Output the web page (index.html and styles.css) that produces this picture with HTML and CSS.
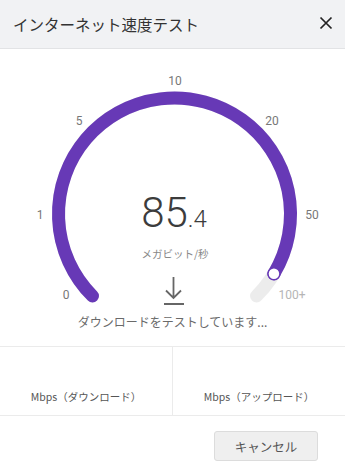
FILE: index.html
```html
<!DOCTYPE html>
<html lang="ja">
<head>
<meta charset="utf-8">
<link rel="stylesheet" href="styles.css">
</head>
<body>
<div class="dialog">
  <header class="header">
    <h1 class="title">インターネット速度テスト</h1>
    <button class="close" aria-label="閉じる">
      <svg width="14" height="14" viewBox="0 0 14 14"><path d="M1.5 1.5 L12.5 12.5 M12.5 1.5 L1.5 12.5" stroke="#222" stroke-width="1.7" fill="none"/></svg>
    </button>
  </header>
  <section class="gauge">
    <svg class="gauge-svg" width="345" height="262" viewBox="0 0 345 262">
      <path d="M92.48 247.02 A116 116 0 1 1 256.52 247.02" class="track"/>
      <path d="M92.48 247.02 A116 116 0 1 1 273.93 224.74" class="fill"/>
      <circle cx="273.93" cy="224.74" r="6" class="knob"/>
      <g class="ticks">
        <text x="175" y="32">10</text>
        <text x="79" y="72">5</text>
        <text x="272" y="72">20</text>
        <text x="40" y="166">1</text>
        <text x="312" y="166">50</text>
        <text x="66" y="246">0</text>
        <text x="292" y="246" class="max">100+</text>
      </g>
      <text x="174" y="178" class="value">85<tspan class="decimal">.4</tspan></text>
      <text x="175" y="204" class="unit">メガビット/秒</text>
      <path d="M173.5 228 V249 M166 241.5 L173.5 249 L181 241.5 M164 255 H184" class="arrow"/>
    </svg>
    <p class="status">ダウンロードをテストしています...</p>
  </section>
  <section class="stats">
    <div class="stat"><span class="stat-label">Mbps（ダウンロード）</span></div>
    <div class="stat"><span class="stat-label">Mbps（アップロード）</span></div>
  </section>
  <footer class="footer">
    <button class="cancel">キャンセル</button>
  </footer>
</div>
</body>
</html>
```
FILE: styles.css
```css
html, body {
  margin: 0;
  padding: 0;
  background: #fff;
}
body {
  width: 345px;
  height: 472px;
  overflow: hidden;
  font-family: "Noto Sans CJK JP", "Noto Sans", sans-serif;
}
.dialog {
  display: flex;
  flex-direction: column;
}
.header {
  height: 48px;
  background: #f1f2f4;
  border-bottom: 1px solid #e2e3e5;
  display: flex;
  align-items: center;
  justify-content: space-between;
  padding: 0 12px 0 13px;
}
.title {
  margin: 0;
  font-size: 15.5px;
  font-weight: 400;
  color: #333;
  letter-spacing: 0;
}
.close {
  border: 0;
  background: transparent;
  padding: 0;
  width: 14px;
  height: 14px;
  display: flex;
  margin-top: -2px;
}
.gauge {
  display: flex;
  flex-direction: column;
  align-items: center;
}
.gauge-svg {
  display: block;
}
.track {
  fill: none;
  stroke: #ececec;
  stroke-width: 13;
  stroke-linecap: round;
}
.fill {
  fill: none;
  stroke: #6739b6;
  stroke-width: 13;
  stroke-linecap: round;
}
.knob {
  fill: #fff;
  stroke: #6739b6;
  stroke-width: 1.5;
}
.ticks text {
  font-family: Roboto, "Liberation Sans", sans-serif;
  font-size: 12px;
  fill: #777;
  text-anchor: middle;
  dominant-baseline: central;
}
.ticks .max {
  fill: #b5b5b5;
}
.value {
  font-family: Roboto, "Liberation Sans", sans-serif;
  font-size: 42px;
  font-weight: 300;
  fill: #3c3c3c;
  text-anchor: middle;
}
.decimal {
  font-size: 24px;
}
.unit {
  font-family: "Noto Sans CJK JP", sans-serif;
  font-size: 10.5px;
  fill: #888;
  text-anchor: middle;
  dominant-baseline: central;
}
.arrow {
  fill: none;
  stroke: #666;
  stroke-width: 1.8;
}
.status {
  margin: 0 0 13px;
  height: 22px;
  line-height: 22px;
  font-size: 12px;
  color: #6a6a6a;
}
.stats {
  display: flex;
  height: 68px;
  border-top: 1px solid #ebebeb;
  border-bottom: 1px solid #ebebeb;
}
.stat {
  flex: 1;
  display: flex;
  align-items: flex-end;
  justify-content: center;
  padding-bottom: 10px;
}
.stat + .stat {
  border-left: 1px solid #ebebeb;
}
.stat-label {
  font-size: 10.5px;
  line-height: 16px;
  color: #555;
}
.footer {
  display: flex;
  justify-content: flex-end;
  padding: 15px 27px 0 0;
}
.cancel {
  width: 104px;
  height: 30px;
  border: 1px solid #dcdcdc;
  border-radius: 3px;
  background: #efefef;
  font-family: "Noto Sans CJK JP", sans-serif;
  font-size: 12.5px;
  color: #555;
  padding: 0;
}
```
